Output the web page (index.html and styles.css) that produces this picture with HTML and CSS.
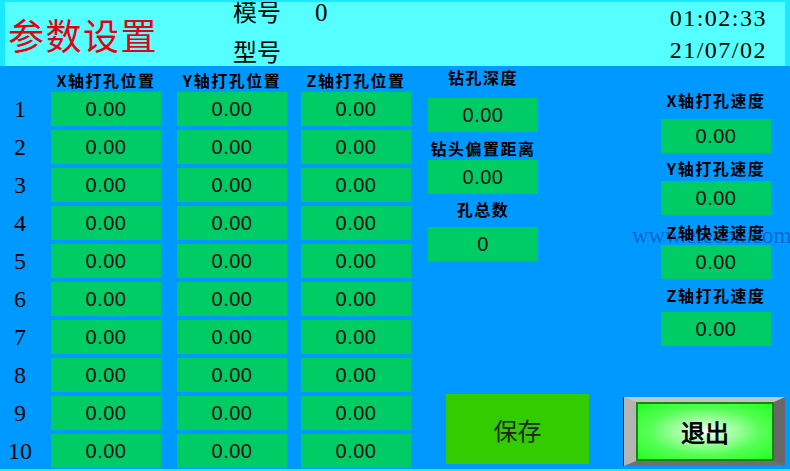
FILE: index.html
```html
<!DOCTYPE html>
<html lang="zh-CN">
<head>
  <meta charset="UTF-8" />
  <meta name="viewport" content="width=device-width, initial-scale=1" />
  <title>参数设置</title>
  <link rel="stylesheet" href="styles.css">
</head>
<body>
  <div class="screen">
    <!-- Top bar: page title, mould / model, clock -->
    <header class="topbar">
      <h1 class="title">参数设置</h1>
      <div class="model">
        <div class="model-row"><span>模号</span><span class="model-no">0</span></div>
        <div class="model-row">型号</div>
      </div>
      <div class="clock">
        <div>01:02:33</div>
        <div>21/07/02</div>
      </div>
    </header>

    <main class="panel">
      <!-- Drill positions, 10 holes x 3 axes -->
      <div class="positions">
        <span></span>
        <span class="col-head">X轴打孔位置</span>
        <span class="col-head">Y轴打孔位置</span>
        <span class="col-head">Z轴打孔位置</span>

        <span class="row-no">1</span><span class="box">0.00</span><span class="box">0.00</span><span class="box">0.00</span>
        <span class="row-no">2</span><span class="box">0.00</span><span class="box">0.00</span><span class="box">0.00</span>
        <span class="row-no">3</span><span class="box">0.00</span><span class="box">0.00</span><span class="box">0.00</span>
        <span class="row-no">4</span><span class="box">0.00</span><span class="box">0.00</span><span class="box">0.00</span>
        <span class="row-no">5</span><span class="box">0.00</span><span class="box">0.00</span><span class="box">0.00</span>
        <span class="row-no">6</span><span class="box">0.00</span><span class="box">0.00</span><span class="box">0.00</span>
        <span class="row-no">7</span><span class="box">0.00</span><span class="box">0.00</span><span class="box">0.00</span>
        <span class="row-no">8</span><span class="box">0.00</span><span class="box">0.00</span><span class="box">0.00</span>
        <span class="row-no">9</span><span class="box">0.00</span><span class="box">0.00</span><span class="box">0.00</span>
        <span class="row-no">10</span><span class="box">0.00</span><span class="box">0.00</span><span class="box">0.00</span>
      </div>

      <div class="side">
        <div class="fields">
          <!-- Drill settings -->
          <div class="col col-drill">
            <span class="cap">钻孔深度</span>
            <span class="box mt-10">0.00</span>
            <span class="cap mt-5">钻头偏置距离</span>
            <span class="box mt-1">0.00</span>
            <span class="cap mt-4">孔总数</span>
            <span class="box mt-7">0</span>
          </div>

          <!-- Axis speeds -->
          <div class="col col-speed">
            <span class="cap mt-23">X轴打孔速度</span>
            <span class="box mt-8">0.00</span>
            <span class="cap mt-4">Y轴打孔速度</span>
            <span class="box mt-2">0.00</span>
            <span class="cap mt-6">Z轴快速速度</span>
            <span class="box mt-2">0.00</span>
            <span class="cap mt-5">Z轴打孔速度</span>
            <span class="box mt-6">0.00</span>
          </div>
        </div>

        <div class="actions">
          <button class="btn-save" type="button">保存</button>
          <button class="btn-exit" type="button"><span class="exit-face">退出</span></button>
        </div>
      </div>

      <span class="watermark">www.elecok.com</span>
    </main>
  </div>
</body>
</html>
```

FILE: styles.css
```css
/* Base */
body {
  margin: 0;
  background: #0099ff;
  font-family: "Noto Sans CJK SC", "Noto Sans", sans-serif;
  color: #000;
}
.screen {
  width: 790px;
  height: 471px;
  box-sizing: border-box;
  border-bottom: 2px solid #22eeff;
  display: flex;
  flex-direction: column;
  overflow: hidden;
}

/* Top bar */
.topbar {
  height: 64px;
  flex: 0 0 auto;
  display: flex;
  align-items: center;
  background: #55ffff;
  border-top: 2px solid #1ae8ff;
  border-left: 5px solid #1ae8ff;
  border-right: 5px solid #1ae8ff;
  overflow: hidden;
}
.title {
  flex: 0 0 225px;
  margin: 0 0 0 3px;
  font-size: 36px;
  font-weight: normal;
  letter-spacing: 1.5px;
  line-height: 40px;
  color: #e60012;
}
.model {
  align-self: flex-start;
  margin-top: -6px;
  display: flex;
  flex-direction: column;
  gap: 8px;
  font-size: 24px;
  line-height: 30px;
}
.model-no {
  margin-left: 34px;
  font-family: "Liberation Serif", serif;
  font-size: 25px;
}
.clock {
  margin-left: auto;
  padding-right: 18px;
  align-self: flex-start;
  font-family: "Liberation Serif", serif;
  font-size: 24px;
  letter-spacing: 1.5px;
  line-height: 32px;
  text-align: right;
}

/* Main panel */
.panel {
  flex: 1;
  display: flex;
  position: relative;
}

/* Value boxes */
.box {
  width: 110px;
  height: 34px;
  display: flex;
  align-items: center;
  justify-content: center;
  background: #00cc66;
  font-family: "Liberation Sans", sans-serif;
  font-size: 20px;
  letter-spacing: 0.5px;
  color: #111;
}

/* Position table */
.positions {
  display: grid;
  grid-template-columns: 51px 126px 124px 110px;
  grid-template-rows: 22px repeat(10, 34px);
  row-gap: 4px;
  align-items: center;
}
.col-head {
  width: 110px;
  align-self: end;
  font-size: 16px;
  font-weight: bold;
  letter-spacing: 1.5px;
  line-height: 16px;
  white-space: nowrap;
  text-align: center;
}
.row-no {
  width: 40px;
  text-align: center;
  font-family: "Liberation Serif", serif;
  font-size: 24px;
  line-height: 34px;
}

/* Right side: settings columns and buttons */
.side {
  flex: 1;
  display: flex;
  flex-direction: column;
}
.fields {
  display: flex;
}
.col {
  display: flex;
  flex-direction: column;
  align-items: center;
}
.col-drill {
  margin-left: 17px;
  width: 110px;
}
.col-speed {
  margin-left: 123px;
  width: 110px;
}
.cap {
  font-size: 16px;
  font-weight: bold;
  letter-spacing: 1.5px;
  line-height: 22px;
  white-space: nowrap;
  position: relative;
  z-index: 1;
}
.mt-1 { margin-top: 1px; }
.mt-2 { margin-top: 2px; }
.mt-4 { margin-top: 4px; }
.mt-5 { margin-top: 5px; }
.mt-6 { margin-top: 6px; }
.mt-7 { margin-top: 7px; }
.mt-8 { margin-top: 8px; }
.mt-10 { margin-top: 10px; }
.mt-23 { margin-top: 23px; }

.actions {
  margin-top: auto;
  display: flex;
  align-items: flex-end;
}
.btn-save {
  margin: 0 0 5px 35px;
  width: 143px;
  height: 70px;
  border: none;
  padding: 0;
  background: #33cc00;
  font-family: inherit;
  font-size: 24px;
  color: #1a2a10;
}
.btn-exit {
  margin: 0 0 3px 35px;
  width: 161px;
  height: 69px;
  padding: 0;
  border-style: solid;
  border-width: 5px 11px 5px 12px;
  border-color: #c4c4c4 #686868 #707070 #b4b4b4;
  box-shadow: -1px 0 0 #111;
  background: none;
}
.exit-face {
  display: flex;
  align-items: center;
  justify-content: center;
  height: 100%;
  box-sizing: border-box;
  border: 2px solid #118811;
  background: radial-gradient(ellipse at center, #ffffff 0%, #b8ffb8 22%, #55ff55 60%, #22ff22 100%);
  font-family: inherit;
  font-size: 24px;
  font-weight: bold;
  color: #000;
}

.watermark {
  position: absolute;
  left: 632px;
  top: 158px;
  font-family: "Liberation Serif", serif;
  font-size: 23px;
  line-height: 23px;
  color: rgba(20, 60, 170, 0.55);
  white-space: nowrap;
  pointer-events: none;
}
```
